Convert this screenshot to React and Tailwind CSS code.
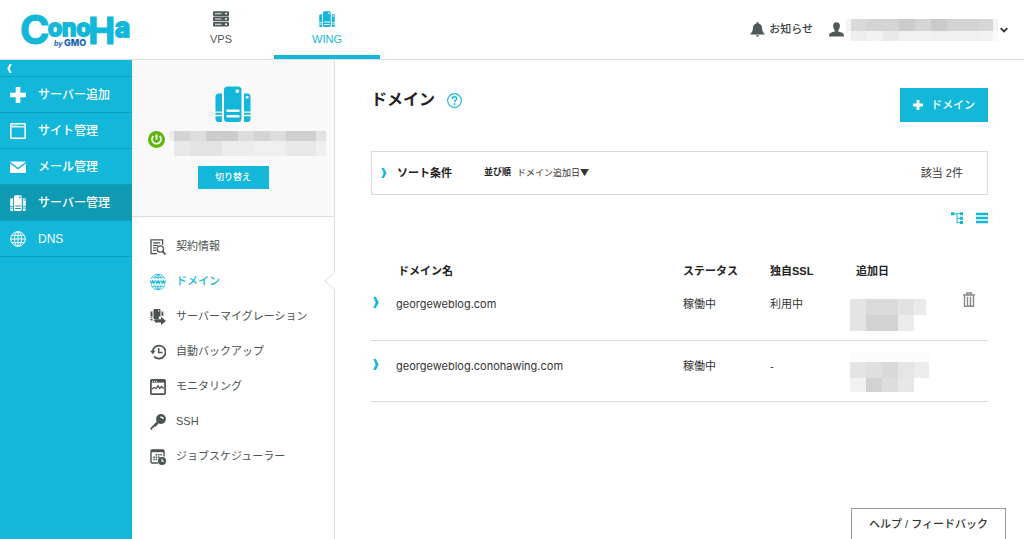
import React from "react";

const svgBase = { viewBox: "0 0 16 16", "aria-hidden": true };

function Logo() {
  return (
    <svg viewBox="0 0 112 40" className="h-10 w-28 overflow-visible" role="img" aria-label="ConoHa by GMO">
      <g className="fill-[#12b7d9] stroke-[#12b7d9] font-['Inter',sans-serif] font-bold">
        <text x="-1" y="34" fontSize="40" strokeWidth="1">C</text>
        <text x="27" y="26" fontSize="23" strokeWidth="2">ono</text>
        <text x="67" y="34" fontSize="38" strokeWidth="1" className="font-['Liberation_Sans',sans-serif]">H</text>
        <text x="94" y="27" fontSize="26" strokeWidth="2">a</text>
      </g>
      <g className="fill-[#1763b5] font-['Inter',sans-serif] font-bold italic">
        <text x="33" y="36" fontSize="7">by</text>
        <text x="43" y="36" fontSize="9" className="font-extrabold not-italic">GMO</text>
      </g>
    </svg>
  );
}

function ServerStack({ className }) {
  return (
    <svg {...svgBase} className={className}>
      {[0.3, 5.6, 10.9].map((y) => (
        <g key={y}>
          <rect x="0" y={y} width="16" height="4.6" rx="1" fill="currentColor" />
          <rect x="2" y={y + 1.8} width="6.5" height="1.2" fill="#fff" opacity=".75" />
          <circle cx="13" cy={y + 2.3} r="1" fill="#fff" />
        </g>
      ))}
    </svg>
  );
}

function Towers({ className }) {
  return (
    <svg viewBox="0 0 36 36" aria-hidden="true" className={className} fill="currentColor">
      <path fillRule="evenodd" d="M12.500 0.500h10.500a3.500 3.500 0 0 1 3.500 3.500v28.500a3.500 3.500 0 0 1-3.500 3.500H12.500a3.500 3.500 0 0 1-3.500-3.500V4a3.500 3.500 0 0 1 3.500-3.500zM22.300 3.200a1.900 1.900 0 1 0 .01 0zM11.500 23.500v2.500h13v-2.500zM11.500 29v2.500h13V29z" />
      <path d="M3 7.500h4v18H0.500v-15A3 3 0 0 1 3 7.500zM0.500 26.800H7v2H0.500zM0.500 30.200H7V36H3.500a3 3 0 0 1-3-3z" />
      <path fillRule="evenodd" d="M29 7.500h3.500a3 3 0 0 1 3 3v15H29zM32.200 9.700a1.500 1.500 0 1 0 .01 0zM29 26.800h6.500v2H29zM29 30.200h6.500V33a3 3 0 0 1-3 3H29z" />
    </svg>
  );
}

function Plus({ className }) {
  return (
    <svg {...svgBase} className={className} fill="currentColor">
      <path d="M5.700 0h4.600v5.700H16v4.600h-5.700V16H5.700v-5.700H0V5.700h5.700z" />
    </svg>
  );
}

function BrowserWindow({ className }) {
  return (
    <svg {...svgBase} className={className} fill="none" stroke="currentColor">
      <rect x=".8" y=".8" width="14.400" height="14.400" rx=".6" strokeWidth="1.600" />
      <path d="M1 3.800h14" strokeWidth="1.300" />
      <path d="M2.500 2.300h1M4.500 2.300h1M6.500 2.300h1" strokeWidth="1" />
    </svg>
  );
}

function Mail({ className }) {
  return (
    <svg {...svgBase} className={className}>
      <rect x="0" y="2.500" width="16" height="11.500" rx="1" fill="currentColor" />
      <path d="M0 3.500l8 6 8-6" fill="none" stroke="#12b7d9" strokeWidth="1.400" />
    </svg>
  );
}

function Globe({ className }) {
  return (
    <svg {...svgBase} className={className} fill="none" stroke="currentColor">
      <circle cx="8" cy="8" r="7.300" />
      <ellipse cx="8" cy="8" rx="3.500" ry="7.300" />
      <path d="M8 .7v14.600M.7 8h14.600M1.800 4.400h12.400M1.800 11.600h12.400" />
    </svg>
  );
}

function WwwGlobe({ className }) {
  return (
    <svg {...svgBase} className={className} fill="none" stroke="currentColor" strokeWidth=".8">
      <path d="M1 5.200a7.500 7.500 0 0 1 14 0M1 10.800a7.500 7.500 0 0 0 14 0M8 .6v4.600M8 10.800v4.600M4.600 5.200C5 3 6.500 1 8 .6 9.500 1 11 3 11.400 5.200M4.600 10.800C5 13 6.500 15 8 15.400c1.500-.4 3-2.400 3.400-4.600M2.400 3.300h11.200M2.400 12.700h11.200" />
      <path strokeWidth="1.100" d="M.4 6.500l1.100 2.900L2.700 6.700l1.200 2.700L5 6.500M5.700 6.500l1.100 2.900L8 6.700l1.200 2.700 1.100-2.900M11 6.500l1.100 2.900 1.200-2.700 1.200 2.700 1.100-2.900" />
    </svg>
  );
}

function Contract({ className }) {
  return (
    <svg {...svgBase} className={className} fill="none" stroke="currentColor">
      <path d="M7 14.700H1V.9h11.600v5" strokeWidth="1.300" />
      <path d="M3.200 3.800h7M3.200 6.300h4.500M3.200 8.800h2.500M3.200 11.300h2.500" strokeWidth="1.200" />
      <circle cx="10.300" cy="10" r="3.200" strokeWidth="1.300" />
      <path d="M12.500 12.300l3 3.200" strokeWidth="1.700" />
    </svg>
  );
}

function Migration({ className }) {
  return (
    <svg {...svgBase} className={className} fill="currentColor">
      <path fillRule="evenodd" d="M4.500 0h5a1 1 0 0 1 1 1v6.500H8.800V10H4.500a1 1 0 0 1-1-1V1a1 1 0 0 1 1-1zM8 1.300v1.200h1.200V1.300z" />
      <path d="M.5 2.500h2v5h-2zM.5 8.300h2v1h-2zM.5 10h2v1.600H1.200L.5 11zM11.500 2.500h1.800v4.300h-1.800zM3.500 10.700h5v1h-5z" />
      <path d="M5 10.300h6V7.800l5 4.100-5 4.100v-2.500H5z" />
    </svg>
  );
}

function Backup({ className }) {
  return (
    <svg {...svgBase} className={className} fill="none" stroke="currentColor" strokeWidth="1.800">
      <path d="M2.600 7.500a6.500 6.500 0 1 1 1.500 4.800" />
      <path d="M8.700 4v4.400h3.800" strokeWidth="1.500" />
      <path d="M0 6.800h5.600L2.800 10.200z" fill="currentColor" stroke="none" />
    </svg>
  );
}

function Monitoring({ className }) {
  return (
    <svg {...svgBase} className={className} fill="none" stroke="currentColor">
      <rect x=".9" y=".9" width="14.200" height="14.200" rx=".8" strokeWidth="1.700" />
      <path d="M1 2.300h14" strokeWidth="2.600" />
      <path d="M2 2.300h1M4 2.300h1M6 2.300h1" stroke="#fff" />
      <path d="M2 10l2.500-1.500 1.700 1L8 6.800l1.700 2.700L11.500 7.500l1 1.300H14" strokeWidth="1.300" />
    </svg>
  );
}

function Key({ className }) {
  return (
    <svg {...svgBase} className={className}>
      <path d="M.2 14.300l6.600-6.900 2 1.900-3.300 3.500-1.200-.4-.3 1.300-1.200-.2-.4 1.600-1.200.8z" fill="currentColor" />
      <circle cx="11" cy="5" r="4.900" fill="currentColor" />
      <path d="M10 3.200a2.600 2.600 0 0 1 3.400 1.800" fill="none" stroke="#fff" strokeWidth="1.200" />
    </svg>
  );
}

function Schedule({ className }) {
  return (
    <svg {...svgBase} className={className} fill="none" stroke="currentColor">
      <path d="M8 14H2.200A1.200 1.200 0 0 1 1 12.800V2.200A1.200 1.200 0 0 1 2.200 1h10.600A1.200 1.200 0 0 1 14 2.200V7.500" strokeWidth="1.400" />
      <path d="M1 2h13" strokeWidth="2.400" />
      <path d="M5.500 5.800H12M3.200 8.200H10M3.200 10.600H8" strokeWidth="1.500" strokeDasharray="1.600 .8" />
      <circle cx="12" cy="12" r="4" fill="currentColor" stroke="none" />
      <path d="M12 9.800v2.400h2" stroke="#fff" strokeWidth="1.100" />
    </svg>
  );
}

function Chevron({ className }) {
  return (
    <svg viewBox="0 0 6 12" aria-hidden="true" className={className} fill="currentColor">
      <path d="M0 0h2.900L6 6l-3.100 6H0l2.700-6z" />
    </svg>
  );
}

function Bell({ className }) {
  return (
    <svg {...svgBase} className={className} fill="currentColor">
      <path d="M8 .3c.8 0 1.300.5 1.300 1.200 2.500.6 3.500 2.500 3.600 5 .1 3 .7 4.300 2.600 6v.8H.5v-.8c1.900-1.700 2.500-3 2.600-6 .1-2.500 1.100-4.400 3.600-5C6.700.8 7.200.3 8 .3zM6.300 14.100h3.400c-.2 1-.8 1.500-1.700 1.500s-1.500-.5-1.700-1.500z" />
    </svg>
  );
}

function User({ className }) {
  return (
    <svg {...svgBase} className={className} fill="currentColor">
      <path d="M8 .3c2.400 0 3.700 1.600 3.600 4-.1 2-.8 3.500-1.800 4.500v1.300c2.900.9 6.100 1.200 6.100 4.200v1.200H.1v-1.200c0-3 3.200-3.300 6.100-4.200V8.800C5.200 7.800 4.500 6.300 4.400 4.300 4.300 1.900 5.600.3 8 .3z" />
    </svg>
  );
}

function Trash({ className }) {
  return (
    <svg viewBox="0 0 12 15" aria-hidden="true" className={className} fill="none" stroke="currentColor">
      <path d="M0 3h12M3.800 3V1h4.400v2" strokeWidth="1.600" />
      <path d="M1.500 3.500v10.800h9V3.500M4.500 5v8.500M7.500 5v8.500" strokeWidth="1.400" />
    </svg>
  );
}

// Each row is a height plus cell classes (width and colour) that hide private text.
function Mosaic({ rows, label }) {
  return (
    <div role="img" aria-label={label} className="flex flex-col">
      {rows.map(([height, cells], r) => (
        <div key={r} className={`flex ${height}`}>
          {cells.map((cell, c) => (
            <div key={c} className={cell} />
          ))}
        </div>
      ))}
    </div>
  );
}

const accountMosaic = [
  ["h-3", ["w-[5px] bg-[#f3f3f3]", "w-4 bg-[#d9d9d9]", "w-8 bg-[#d4d4d4]", "w-4 bg-[#cbcbcb]", "w-4 bg-[#d5d5d5]", "w-4 bg-[#cacaca]", "w-8 bg-[#d3d3d3]", "w-[14px] bg-[#d7d7d7]", "w-[5px] bg-[#f4f4f4]"]],
  ["h-[10px]", ["w-[5px] bg-[#fafafa]", "w-4 bg-[#eeeeee]", "w-4 bg-[#f2f2f2]", "w-4 bg-[#e9e9e9]", "w-8 bg-[#f1f1f1]", "w-12 bg-[#efefef]", "w-[14px] bg-[#f1f1f1]", "w-[5px] bg-[#f9f9f9]"]],
];

const serverMosaic = [
  ["h-[10px]", ["w-[5px] bg-[#eeeeee]", "w-4 bg-[#d4d4d4]", "w-4 bg-[#dddddd]", "w-8 bg-[#cccccc]", "w-4 bg-[#dddddd]", "w-4 bg-[#d3d3d3]", "w-4 bg-[#dddddd]", "w-[30px] bg-[#cfcfcf]", "w-[10px] bg-[#e2e2e2]"]],
  ["h-[15px]", ["w-[5px]", "w-4 bg-[#e8e8e8]", "w-8 bg-[#e3e3e3]", "w-8 bg-[#ececec]", "w-8 bg-[#efefef]", "w-[30px] bg-[#e8e8e8]", "w-[10px] bg-[#efefef]"]],
];

const firstDate = [
  ["h-4", ["w-4 bg-[#e4e4e4]", "w-8 bg-[#dadada]", "w-4 bg-[#e2e2e2]", "w-3 bg-[#eaeaea]"]],
  ["h-4", ["w-4 bg-[#e3e3e3]", "w-8 bg-[#d2d2d2]", "w-4 bg-[#ebebeb]"]],
];

const secondDate = [
  ["h-[9px]", ["w-20 bg-[#fcfcfc]"]],
  ["h-4", ["w-4 bg-[#e4e4e4]", "w-4 bg-[#dfdfdf]", "w-4 bg-[#d9d9d9]", "w-4 bg-[#e5e5e5]", "w-[15px] bg-[#ececec]"]],
  ["h-[14px]", ["w-4 bg-[#f1f1f1]", "w-4 bg-[#d2d2d2]", "w-4 bg-[#dddddd]", "w-4 bg-[#e7e7e7]"]],
];

const mainNav = [
  ["サーバー追加", Plus],
  ["サイト管理", BrowserWindow],
  ["メール管理", Mail],
  ["サーバー管理", Towers],
  ["DNS", Globe],
];

const subNav = [
  ["契約情報", Contract],
  ["ドメイン", WwwGlobe],
  ["サーバーマイグレーション", Migration],
  ["自動バックアップ", Backup],
  ["モニタリング", Monitoring],
  ["SSH", Key],
  ["ジョブスケジューラー", Schedule],
];

const domains = [
  { name: "georgeweblog.com", ssl: "利用中", date: firstDate, dateClass: "pt-5", removable: true },
  { name: "georgeweblog.conohawing.com", ssl: "-", date: secondDate, dateClass: "pt-3", removable: false },
];

function Header() {
  return (
    <header className="flex h-[60px] items-stretch justify-between border-b border-[#dedede]">
      <div className="flex">
        <a href="#home" className="flex w-[168px] items-center pl-[21px]">
          <Logo />
        </a>
        <nav className="flex" aria-label="サービス">
          <a href="#vps" className="flex w-[106px] flex-col items-center gap-1 pt-[11px] leading-4 text-[#4f5959]">
            <ServerStack className="size-4" />
            <span>VPS</span>
          </a>
          <a href="#wing" aria-current="page" className="flex w-[106px] flex-col items-center gap-1 border-b-4 border-[#12b7d9] pt-[11px] leading-4 text-[#12b7d9]">
            <Towers className="size-4" />
            <span>WING</span>
          </a>
        </nav>
      </div>
      <div className="flex items-center gap-4 pr-4">
        <a href="#news" className="flex items-center gap-1 font-medium text-[#3c4444]">
          <Bell className="size-[15px] text-[#4f5959]" />
          お知らせ
        </a>
        <button type="button" aria-label="アカウント" className="flex items-center gap-[2px]">
          <User className="size-[15px] text-[#4f5959]" />
          <Mosaic rows={accountMosaic} label="アカウント名" />
          <svg viewBox="0 0 8 6" aria-hidden="true" className="h-[6px] w-2 text-[#333]" fill="none" stroke="currentColor" strokeWidth="1.800">
            <path d="M.7 1.200L4 4.500l3.300-3.300" />
          </svg>
        </button>
      </div>
    </header>
  );
}

function Sidebar() {
  return (
    <nav aria-label="メイン" className="w-[132px] shrink-0 bg-[#12b7d9] text-white">
      <button type="button" aria-label="メニューを閉じる" className="flex h-4 w-full items-center pl-[7px]">
        <Chevron className="h-[9px] w-[5px] rotate-180" />
      </button>
      <ul className="border-b border-[#109fbd]">
        {mainNav.map(([label, Icon]) => (
          <li key={label}>
            <a
              href="#menu"
              className={`flex h-9 items-center gap-3 border-t border-[#109fbd] pl-[10px] text-xs font-medium ${label === "サーバー管理" ? "bg-[#0f9ab3]" : ""}`}
            >
              <Icon className="size-4 shrink-0" />
              {label}
            </a>
          </li>
        ))}
      </ul>
    </nav>
  );
}

function ServerPanel() {
  return (
    <aside className="flex w-[203px] shrink-0 flex-col border-r border-[#dedede]">
      <div className="flex h-[157px] flex-col items-center border-b border-[#dedede] bg-[#f9f9f9] pt-[26px]">
        <Towers className="size-9 text-[#12b7d9]" />
        <div className="mt-[9px] flex items-start gap-1 self-start pl-4">
          <svg viewBox="0 0 16 16" role="img" aria-label="稼働中" className="size-[17px]">
            <circle cx="8" cy="8" r="8" fill="#5cb80f" />
            <path d="M5 4.800a4.200 4.200 0 1 0 6 0M8 3.200v5" fill="none" stroke="#fff" strokeWidth="1.700" />
          </svg>
          <Mosaic rows={serverMosaic} label="サーバー名" />
        </div>
        <button type="button" className="mt-[10px] h-[23px] w-[71px] bg-[#12b7d9] text-[9px] font-medium text-white">
          切り替え
        </button>
      </div>
      <nav aria-label="サーバー管理" className="pt-3">
        <ul>
          {subNav.map(([label, Icon]) => {
            const active = label === "ドメイン";
            return (
              <li key={label} className="relative">
                <a href="#section" aria-current={active ? "page" : undefined} className={`flex h-[35px] items-center gap-[10px] pl-[18px] ${active ? "font-medium text-[#12b7d9]" : "text-[#4a5252]"}`}>
                  <Icon className="size-4 shrink-0" />
                  {label}
                </a>
                {active && (
                  <svg viewBox="0 0 11 18" aria-hidden="true" className="absolute top-2 -right-px h-[18px] w-[11px]">
                    <path d="M11 .5h-.5L1 9l9.500 8.500h.5z" fill="#fff" />
                    <path d="M10.500 .5L1 9l9.500 8.500" fill="none" stroke="#dedede" />
                  </svg>
                )}
              </li>
            );
          })}
        </ul>
      </nav>
    </aside>
  );
}

function DomainTable() {
  return (
    <table className="mt-[39px] w-full table-fixed border-collapse text-left">
      <colgroup>
        <col className="w-[25px]" />
        <col />
        <col className="w-[87px]" />
        <col className="w-20" />
        <col className="w-[107px]" />
        <col className="w-[31px]" />
      </colgroup>
      <thead>
        <tr className="h-4 align-top font-bold leading-4 text-[#222]">
          <td />
          <th scope="col" className="pl-[2px]">ドメイン名</th>
          <th scope="col">ステータス</th>
          <th scope="col">独自SSL</th>
          <th scope="col" className="pl-[6px]">追加日</th>
          <td />
        </tr>
      </thead>
      <tbody>
        {domains.map((d) => (
          <tr key={d.name} className="h-[61px] border-b border-[#d9d9d9] align-top leading-4 text-[#333]">
            <td className="pt-[18px]">
              <button type="button" aria-label={`${d.name} の詳細`} className="block pl-[2px] text-[#12b7d9]">
                <Chevron className="h-[11px] w-[6px]" />
              </button>
            </td>
            <td className="pt-[17px] font-['Inter','Noto_Sans_CJK_JP',sans-serif]">{d.name}</td>
            <td className="pt-[17px]">稼働中</td>
            <td className="pt-[17px]">{d.ssl}</td>
            <td className={d.dateClass}>
              <Mosaic rows={d.date} label="追加日" />
            </td>
            <td className="pt-[13px]">
              {d.removable && (
                <button type="button" aria-label="削除" className="block pl-[6px] text-[#888]">
                  <Trash className="h-[15px] w-3" />
                </button>
              )}
            </td>
          </tr>
        ))}
      </tbody>
    </table>
  );
}

export default function App() {
  return (
    <div className="flex min-h-screen flex-col bg-white font-['Liberation_Sans','Noto_Sans_CJK_JP',sans-serif] text-[11px] text-[#333]">
      <Header />
      <div className="flex grow">
        <Sidebar />
        <ServerPanel />
        <main className="min-w-0 grow px-9 pt-7">
          <div className="flex items-start justify-between">
            <div className="flex items-center gap-3">
              <h1 className="text-base font-bold leading-6 text-[#222]">ドメイン</h1>
              <button type="button" aria-label="ヘルプ" className="text-[#12b7d9]">
                <svg {...svgBase} className="size-[15px]" fill="none" stroke="currentColor">
                  <circle cx="8" cy="8" r="7.300" strokeWidth="1.200" />
                  <path d="M5.800 6.300c0-1.400 1-2.200 2.300-2.200s2.200.8 2.200 1.900c0 1.600-2.200 1.700-2.200 3.600" strokeWidth="1.600" />
                  <circle cx="8.100" cy="11.700" r="1" fill="currentColor" stroke="none" />
                </svg>
              </button>
            </div>
            <button type="button" className="flex h-[34px] w-[88px] items-center justify-center gap-2 bg-[#12b7d9] font-medium text-white">
              <Plus className="size-[10px]" />
              ドメイン
            </button>
          </div>
          <div className="mt-[29px] flex h-11 items-center border border-[#d9d9d9] pr-6 pl-[9px]">
            <button type="button" className="flex items-center gap-[10px] font-bold text-[#222]">
              <Chevron className="h-[10px] w-[6px] text-[#12b7d9]" />
              ソート条件
            </button>
            <span className="ml-8 text-[9px] font-bold text-[#222]">並び順</span>
            <button type="button" className="ml-[6px] font-['Noto_Sans_CJK_JP',sans-serif] text-[9px]">ドメイン追加日▼</button>
            <span className="ml-auto">該当 2件</span>
          </div>
          <div className="mt-[17px] flex justify-end gap-[13px] text-[#12b7d9]">
            <button type="button" aria-label="ツリー表示">
              <svg viewBox="0 0 12 12" aria-hidden="true" className="size-3">
                <path d="M3 1.800h7M6 1.800v8.900h4M6 6.200h4" fill="none" stroke="currentColor" />
                <path d="M0 .3h3.300v3H0zM9 .3h3v3H9zM9 4.700h3v3H9zM9 9h3v3H9z" fill="currentColor" />
              </svg>
            </button>
            <button type="button" aria-label="リスト表示">
              <svg viewBox="0 0 12 12" aria-hidden="true" className="size-3">
                <path d="M0 2h12M0 6h12M0 10h12" fill="none" stroke="currentColor" strokeWidth="2.400" />
              </svg>
            </button>
          </div>
          <DomainTable />
        </main>
      </div>
      <button type="button" className="fixed right-[18px] bottom-0 h-[31px] w-[155px] border border-b-0 border-[#999] bg-white font-medium">
        ヘルプ / フィードバック
      </button>
    </div>
  );
}
